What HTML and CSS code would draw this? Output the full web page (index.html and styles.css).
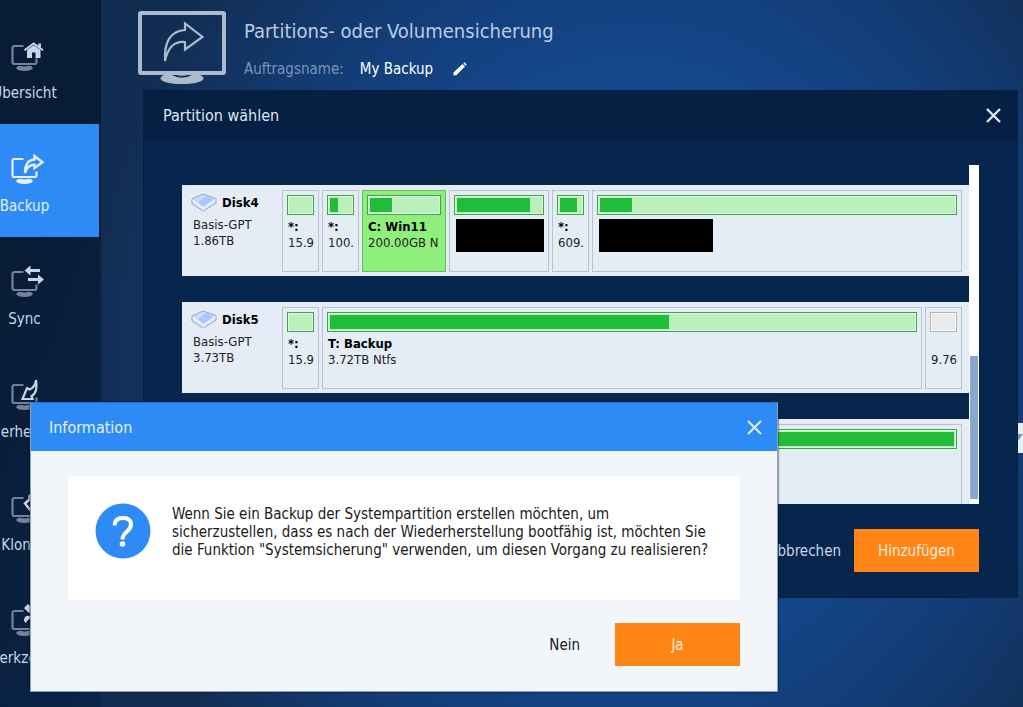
FILE: index.html
```html
<!DOCTYPE html>
<html lang="de">
<head>
    <meta charset="UTF-8">
    <meta name="viewport" content="width=device-width, initial-scale=1.0">
    <title>Partitions- oder Volumensicherung</title>
    <link rel="stylesheet" href="styles.css">
</head>
<body>
    <svg class="defs" aria-hidden="true">
        <symbol id="monitor" viewBox="0 0 34 30">
            <path d="M12.500 5H3.500a2 2 0 0 0-2 2V21a2 2 0 0 0 2 2H23.500a2 2 0 0 0 2-2V17.500" fill="none" stroke="currentColor" stroke-width="2.200"/>
            <path d="M5 27Q6 24.800 9.500 24.800Q13.500 26 17.500 24.800Q21 24.800 22 27Q20.500 29.900 13.500 29.900T5 27Z" fill="currentColor"/>
        </symbol>
        <symbol id="drive" viewBox="0 0 26 20">
            <path d="M1 6L12 1L25 5.500V10L12.500 18L1 11Z" fill="#dbe7f9" stroke="#8fa6cb"/>
            <path d="M3 6.500L12.500 2L23 6L12.500 14Z" fill="#a9c8fb"/>
            <path d="M3 6.500L12.500 2L15 3L7 9.300Z" fill="#c9dcfd"/>
            <path d="M1.500 7.500L12.500 15V17.500M12.500 15L24.500 7" fill="none" stroke="#f4f8ff"/>
        </symbol>
    </svg>

    <nav class="sidebar">
        <a href="#uebersicht">
            <svg width="34" height="30" viewBox="0 0 34 30">
                <use href="#monitor" class="dim"/>
                <path d="M16 9V17h5v-5.500h3.500V17h5V9L22.700 4.200Z" fill="currentColor"/>
                <path d="M13.500 9.200L22.700 2.400L32 9.200" fill="none" stroke="currentColor" stroke-width="2"/>
                <path d="M27.300 2.500h2.700v4h-2.700z" fill="currentColor"/>
            </svg>
            <span>Übersicht</span>
        </a>
        <a href="#backup" class="active">
            <svg width="34" height="30" viewBox="0 0 34 30">
                <use href="#monitor"/>
                <path d="M14 19C14 10.500 16.500 6.200 23.500 5.500V2L31.500 8.300L23.500 14V10.800C18.500 10.800 15.500 13.500 14 19Z" fill="none" stroke="currentColor" stroke-width="2.400"/>
            </svg>
            <span>Backup</span>
        </a>
        <a href="#sync">
            <svg width="34" height="30" viewBox="0 0 34 30">
                <use href="#monitor" class="dim"/>
                <path d="M13.500 3.500L19.500 -1.500V2H29V5H19.500V8.500ZM33 12.500L27 7.500V11H17V14H27V17.500Z" fill="currentColor"/>
            </svg>
            <span>Sync</span>
        </a>
        <a href="#wiederherstellen">
            <svg width="34" height="30" viewBox="0 0 34 30">
                <use href="#monitor" class="dim"/>
                <path d="M25 0C24.500 5 22.500 8 18.500 9.500L16 8L11.500 19H21.500L20.500 16.200C25.500 13 26 8 25 0Z" fill="none" stroke="currentColor" stroke-width="2.200"/>
            </svg>
            <span>Wiederherstellen</span>
        </a>
        <a href="#klonen">
            <svg width="34" height="30" viewBox="0 0 34 30">
                <use href="#monitor" class="dim"/>
                <path d="M18.500 3V6.500L14 10.500L20 18L26 9.500L20 1.500Z" fill="none" stroke="currentColor" stroke-width="2.400"/>
            </svg>
            <span>Klonen</span>
        </a>
        <a href="#werkzeuge">
            <svg width="34" height="30" viewBox="0 0 34 30">
                <use href="#monitor" class="dim"/>
                <path d="M13 2L17 -2L22 3L18 7ZM13 15Q13 9 19 10L22 13Q17 12 15 17Z" fill="currentColor"/>
            </svg>
            <span>Werkzeuge</span>
        </a>
    </nav>

    <main>
        <header class="job">
            <svg width="88" height="74" viewBox="0 0 88 74">
                <rect x="2" y="2" width="84" height="60" rx="1" fill="none" stroke="currentColor" stroke-width="4"/>
                <path d="M27 50C26 30 33 20 47 19V12.500L64.500 26L47 38.500V31C36 30 30 36 27 50Z" fill="none" stroke="currentColor" stroke-width="2.200"/>
                <path d="M27 63.500H33Q44 70 55 63.500H61Q66 65.500 65.500 68Q62 73 44 73T22.500 68Q22 65.500 27 63.500Z" fill="currentColor"/>
                <path d="M37 63.500H51Q44 66 37 63.500Z" fill="currentColor"/>
            </svg>
            <div>
                <h1>Partitions- oder Volumensicherung</h1>
                <p class="job-name">
                    <span>Auftragsname:</span> My Backup
                    <button class="edit" aria-label="Auftragsname bearbeiten">
                        <svg width="14" height="14" viewBox="0 0 14 14">
                            <path d="M0.500 13.500V10.500L9.500 2L12 4.500L3.500 13Z M10.300 1.200L11.500 0.300L13.700 2.500L12.700 3.700Z" fill="#fff"/>
                        </svg>
                    </button>
                </p>
            </div>
        </header>

        <section class="picker">
            <div class="picker-title">
                <h2>Partition wählen</h2>
                <button class="close" aria-label="Schließen">
                    <svg width="15" height="15" viewBox="0 0 15 15"><path d="M1 1L14 14M14 1L1 14" stroke="currentColor" stroke-width="2.400"/></svg>
                </button>
            </div>

            <div class="disk-area">
                <div class="disk-list">
                    <div class="disk">
                        <div class="disk-info">
                            <h3><svg width="26" height="20"><use href="#drive"/></svg>Disk4</h3>
                            <p>Basis-GPT</p>
                            <p>1.86TB</p>
                        </div>
                        <div class="part tiny">
                            <div class="bar"><div style="width: 0%"></div></div>
                            <b>*:</b><span>15.9</span>
                        </div>
                        <div class="part tiny">
                            <div class="bar"><div style="width: 40%"></div></div>
                            <b>*:</b><span>100.</span>
                        </div>
                        <div class="part small selected">
                            <div class="bar"><div style="width: 32%"></div></div>
                            <b>C: Win11</b><span>200.00GB N</span>
                        </div>
                        <div class="part medium">
                            <div class="bar"><div style="width: 87%"></div></div>
                            <div class="hidden-name"></div>
                        </div>
                        <div class="part tiny">
                            <div class="bar"><div style="width: 80%"></div></div>
                            <b>*:</b><span>609.</span>
                        </div>
                        <div class="part rest">
                            <div class="bar"><div style="width: 9%"></div></div>
                            <div class="hidden-name"></div>
                        </div>
                    </div>

                    <div class="disk">
                        <div class="disk-info">
                            <h3><svg width="26" height="20"><use href="#drive"/></svg>Disk5</h3>
                            <p>Basis-GPT</p>
                            <p>3.73TB</p>
                        </div>
                        <div class="part tiny">
                            <div class="bar"><div style="width: 0%"></div></div>
                            <b>*:</b><span>15.9</span>
                        </div>
                        <div class="part rest">
                            <div class="bar"><div style="width: 58%"></div></div>
                            <b>T: Backup</b><span>3.72TB Ntfs</span>
                        </div>
                        <div class="part tiny unallocated">
                            <div class="bar"></div>
                            <b></b><span>9.76</span>
                        </div>
                    </div>

                    <div class="disk">
                        <div class="disk-info"></div>
                        <div class="part rest">
                            <div class="bar"><div style="width: 100%"></div></div>
                        </div>
                    </div>
                </div>
                <div class="scrollbar"><div class="thumb"></div></div>
            </div>

            <div class="picker-actions">
                <button class="plain">Abbrechen</button>
                <button class="primary">Hinzufügen</button>
            </div>
        </section>
    </main>

    <button class="side-arrow" aria-label="Mehr">
        <svg width="12" height="8" viewBox="0 0 12 8"><path d="M0 0H12L6 8Z" fill="#6f97c4"/></svg>
    </button>

    <div class="message" role="dialog" aria-labelledby="message-title">
        <div class="message-title">
            <h2 id="message-title">Information</h2>
            <button class="close" aria-label="Schließen">
                <svg width="15" height="15" viewBox="0 0 15 15"><path d="M1 1L14 14M14 1L1 14" stroke="currentColor" stroke-width="2"/></svg>
            </button>
        </div>
        <div class="message-body">
            <div class="message-text">
                <svg width="56" height="56" viewBox="0 0 56 56">
                    <circle cx="28" cy="28" r="27.500" fill="#2e8bf6"/>
                    <path d="M19.500 22.500Q19.500 15 28 15Q36 15 36 21.500Q36 25 32 28.500Q27.500 32 27.500 36.500" fill="none" stroke="#fff" stroke-width="4"/>
                    <circle cx="27.500" cy="41" r="2.800" fill="#fff"/>
                </svg>
                <p>Wenn Sie ein Backup der Systempartition erstellen möchten, um sicherzustellen, dass es nach der Wiederherstellung bootfähig ist, möchten Sie die Funktion "Systemsicherung" verwenden, um diesen Vorgang zu realisieren?</p>
            </div>
            <div class="message-actions">
                <button class="plain">Nein</button>
                <button class="primary">Ja</button>
            </div>
        </div>
    </div>
</body>
</html>
```

FILE: styles.css
```css
* {
    box-sizing: border-box;
}
body {
    margin: 0;
    min-height: 100vh;
    display: flex;
    position: relative;
    overflow: hidden;
    font-family: "DejaVu Sans Condensed", "Noto Sans", sans-serif;
    font-size: 15px;
    color: #c9d6e8;
    background: radial-gradient(ellipse 53% 85% at 62% 50%, #154f9c 0%, #144a92 40%, #133b73 75%, #122d52 100%);
}
h1, h2, h3, p {
    margin: 0;
    font-weight: normal;
}
button {
    font: inherit;
    color: inherit;
    background: none;
    border: 0;
    padding: 0;
    cursor: pointer;
}
svg {
    display: block;
    overflow: visible;
}
.defs {
    position: absolute;
    width: 0;
    height: 0;
}

/* sidebar, starts outside the window */
.sidebar {
    flex: none;
    width: 151px;
    height: 100vh;
    margin-left: -50px;
    padding: 11px 2px 0 0;
    background: linear-gradient(110deg, #081c37 40%, #0b2548 100%);
}
.sidebar a {
    display: flex;
    flex-direction: column;
    align-items: center;
    gap: 12px;
    height: 113px;
    padding-top: 30px;
    color: #c9d6e8;
    text-decoration: none;
    line-height: 20px;
}
.sidebar a svg {
    margin-left: 6px;
}
.sidebar a.active {
    background-color: #2e8bf6;
    color: #e4f0ff;
}
.dim {
    color: #74839b;
}

main {
    flex: 1;
    min-width: 0;
    padding: 11px 5px 0 37px;
}
.job {
    display: flex;
    gap: 18px;
    height: 79px;
    color: #adb9cc;
}
.job h1 {
    margin-top: 7px;
    font-size: 20px;
    line-height: 26px;
    color: #bccbe2;
}
.job-name {
    display: flex;
    align-items: center;
    gap: 16px;
    margin-top: 15px;
    line-height: 20px;
    color: #fff;
}
.job-name span {
    color: #7c93b8;
}
.edit {
    margin-left: 4px;
}

/* partition window */
.picker {
    margin-left: 5px;
    background-color: #06264d;
    border: 1px solid #06203f;
}
.picker-title {
    display: flex;
    justify-content: space-between;
    align-items: center;
    height: 49px;
    padding: 0 16px 0 19px;
    background-color: #052042;
    color: #dfe7f2;
}
h2 {
    font-size: 16px;
}
.disk-area {
    display: flex;
    height: 339px;
    margin: 25px 38px 0;
    overflow: hidden;
}
.disk-list {
    flex: 1;
    min-width: 0;
    padding-top: 20px;
}
.disk {
    display: flex;
    gap: 3px;
    height: 91px;
    margin-bottom: 26px;
    padding: 5px 7px 4px 0;
    background-color: #e6ecf6;
    color: #222;
    font-size: 13px;
    line-height: 16px;
}
.disk-info {
    flex: none;
    width: 97px;
    padding: 3px 0 0 11px;
}
.disk-info h3 {
    display: flex;
    align-items: center;
    gap: 5px;
    margin-left: -2px;
    margin-bottom: 4px;
    font-size: 13px;
    font-weight: bold;
    color: #000;
}
.part {
    flex: none;
    display: flex;
    flex-direction: column;
    padding: 4px 4px 0;
    overflow: hidden;
    white-space: nowrap;
    background-color: #e4ecf4;
    border: 1px solid #b9c2ce;
}
.tiny {
    width: 37px;
}
.small {
    width: 84px;
}
.medium {
    width: 100px;
}
.rest {
    flex: 1;
}
.selected {
    background-color: #90ee7a;
    border-color: #5fc35a;
}
.bar {
    height: 20px;
    margin-bottom: 4px;
    padding: 2px;
    border: 1px solid #3fa24f;
    background-color: #b9efba;
    box-shadow: inset 0 0 0 1px #e2f7e3;
}
.bar div {
    height: 100%;
    background-color: #22bd38;
}
.unallocated .bar {
    border-color: #b4b4b4;
    background-color: #eaeaea;
    box-shadow: inset 0 0 0 1px #fafafa;
}
.part b, .part span {
    min-height: 16px;
    margin-left: 1px;
}
.part b {
    color: #000;
}
.hidden-name {
    width: 100%;
    max-width: 116px;
    height: 33px;
    border-left: 2px solid #e4ecf4;
    background-color: #000;
}
.scrollbar {
    width: 10px;
    padding: 191px 1px 5px;
    background-color: #fff;
}
.thumb {
    height: 100%;
    background-color: #8aa8cd;
}

.picker-actions, .message-actions {
    display: flex;
    justify-content: flex-end;
}
.picker-actions {
    gap: 13px;
    padding: 25px 38px;
}
.primary {
    width: 125px;
    height: 43px;
    background-color: #ff8517;
    color: #ffeedd;
}

/* end of the control behind the window */
.side-arrow {
    position: absolute;
    top: 423px;
    right: 0;
    width: 5px;
    height: 30px;
    overflow: hidden;
    background-color: #e8eef6;
}
.side-arrow svg {
    margin-left: -7px;
}

/* message on top */
.message {
    position: absolute;
    left: 30px;
    top: 402px;
    width: 748px;
    border: 1px solid #8fa0b8;
    border-top-color: #1d6fd6;
    background-color: #f2f5fa;
    color: #1a1a1a;
    box-shadow: 0 0 2px #04152c;
}
.message-title {
    display: flex;
    justify-content: space-between;
    align-items: center;
    height: 48px;
    padding: 0 15px 0 18px;
    background-color: #2e8bf6;
    color: #e4f0ff;
}
.message-body {
    padding: 25px 37px;
}
.message-text {
    display: flex;
    align-items: flex-start;
    gap: 21px;
    height: 124px;
    padding: 27px 25px 0 27px;
    background-color: #fff;
}
.message-text p {
    margin-top: 2px;
    line-height: 18px;
}
.message-actions {
    gap: 35px;
    margin-top: 23px;
}
```
